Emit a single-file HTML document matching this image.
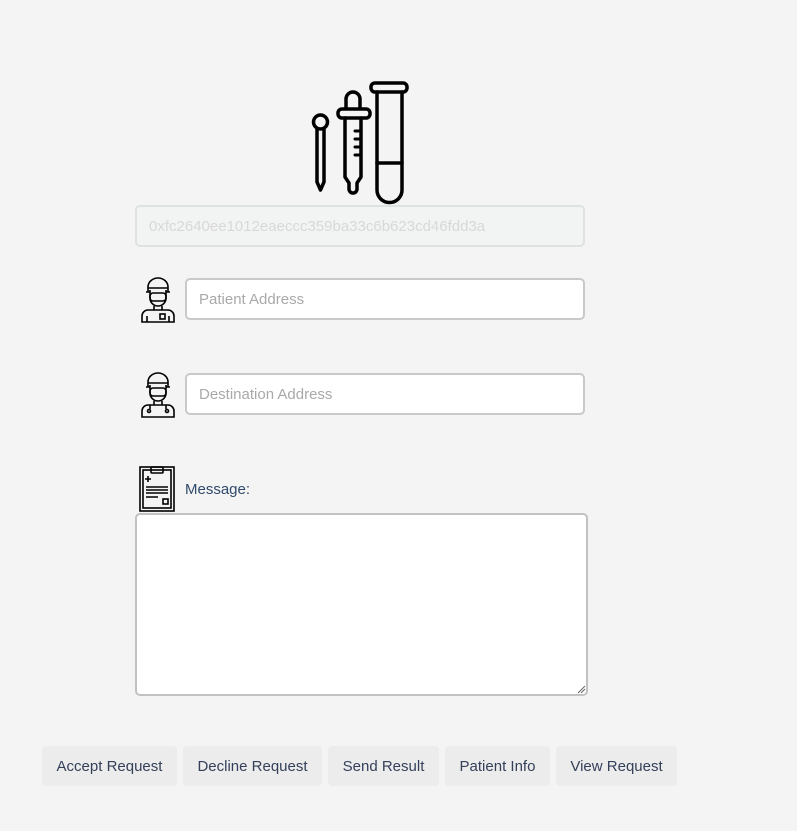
<!DOCTYPE html>
<html><head><style>
body{margin:0;background:#f4f4f4;width:797px;height:831px;position:relative;font-family:"Liberation Sans",sans-serif;overflow:hidden}
.a{position:absolute}
.inp{position:absolute;box-sizing:border-box;border:2px solid #c9c9c9;border-radius:5px;background:#fff;font-size:15px;color:#a9a9a9;padding-left:12px;line-height:40px}
.btn{position:absolute;top:746px;height:40px;background:#ececec;border-radius:4px;font-size:15px;color:#34405a;line-height:42px;text-align:center}
</style></head><body>
<svg class="a" style="left:300px;top:75px" width="120" height="135" viewBox="300 75 120 135" fill="none" stroke="#000" stroke-width="3.5" stroke-linejoin="round" stroke-linecap="round">
<circle cx="320.5" cy="122" r="7"/>
<path d="M317 129 V182 L320.5 190 L324 182 V129"/>
<path d="M346 108 V99 a7 7 0 0 1 14 0 V108"/>
<rect x="338" y="109" width="32" height="9" rx="4"/>
<path d="M345 118 V177 l4 6 V189 a4 4 0 0 0 8 0 V183 l4-6 V118"/>
<path d="M355 131h6M355 139h6M355 147h6M355 155h6" stroke-width="3"/>
<rect x="371" y="83" width="36" height="9" rx="4"/>
<path d="M377 92 V190 a12 12 0 0 0 25 0 V92"/>
<path d="M377 163H402"/>
</svg>
<div class="inp" style="left:135px;top:205px;width:450px;height:42px;background:#f2f3f3;border-color:#dfe2e2;color:#d8d8d8">0xfc2640ee1012eaeccc359ba33c6b623cd46fdd3a</div>
<svg class="a" style="left:138px;top:276px" width="40" height="48" viewBox="0 0 40 48" fill="none" stroke="#000" stroke-width="1.6">
<path d="M10 16 V11 a10 9 0 0 1 20 0 V16"/><path d="M10 12 h20"/>
<path d="M12 14 V22 a8 8 0 0 0 16 0 V14"/><rect x="12" y="17" width="16" height="8" rx="3"/>
<path d="M8 16 h4 M28 16 h4"/>
<path d="M16 30 V34 M24 30 V34"/>
<path d="M4 46 V40 a6 6 0 0 1 6-6 h20 a6 6 0 0 1 6 6 V46 Z"/><path d="M9 40 V46 M31 40 V46"/>
<rect x="22" y="38" width="5" height="5"/>
</svg>
<div class="inp" style="left:185px;top:278px;width:400px;height:42px">Patient Address</div>
<svg class="a" style="left:138px;top:371px" width="40" height="48" viewBox="0 0 40 48" fill="none" stroke="#000" stroke-width="1.6">
<path d="M10 16 V11 a10 9 0 0 1 20 0 V16"/><path d="M10 12 h20"/>
<path d="M12 14 V22 a8 8 0 0 0 16 0 V14"/><rect x="12" y="17" width="16" height="8" rx="3"/>
<path d="M8 16 h4 M28 16 h4"/>
<path d="M16 30 V34 M24 30 V34"/>
<path d="M4 46 V40 a6 6 0 0 1 6-6 h20 a6 6 0 0 1 6 6 V46 Z"/>
<path d="M12 34 V38 M28 34 V38"/><circle cx="11" cy="40" r="1.5"/><circle cx="29" cy="40" r="1.5"/>
</svg>
<div class="inp" style="left:185px;top:373px;width:400px;height:42px">Destination Address</div>
<svg class="a" style="left:139px;top:466px" width="37" height="46" viewBox="0 0 37 46" fill="none" stroke="#000" stroke-width="1.6">
<rect x="1" y="1" width="34" height="44"/><rect x="4" y="4" width="28" height="38"/>
<rect x="12" y="1" width="12" height="6" rx="1"/>
<path d="M9 10 v6 M6 13 h6 M7 21 h22 M7 24 h22 M7 27 h22 M7 31 h12"/>
<rect x="24" y="33" width="5" height="5"/>
</svg>
<div class="a" style="left:185px;top:481px;font-size:15px;color:#2f4a6b">Message:</div>
<div class="a" style="left:135px;top:513px;width:449px;height:179px;border:2px solid #c2c2c2;border-radius:5px;background:#fff"></div>
<svg class="a" style="left:576px;top:684px" width="10" height="10" stroke="#666" stroke-width="1"><path d="M2 9L9 2M5 9L9 5"/></svg>
<div class="btn" style="left:42px;width:135px">Accept Request</div>
<div class="btn" style="left:183px;width:139px">Decline Request</div>
<div class="btn" style="left:328px;width:111px">Send Result</div>
<div class="btn" style="left:445px;width:105px">Patient Info</div>
<div class="btn" style="left:556px;width:121px">View Request</div>
</body></html>
